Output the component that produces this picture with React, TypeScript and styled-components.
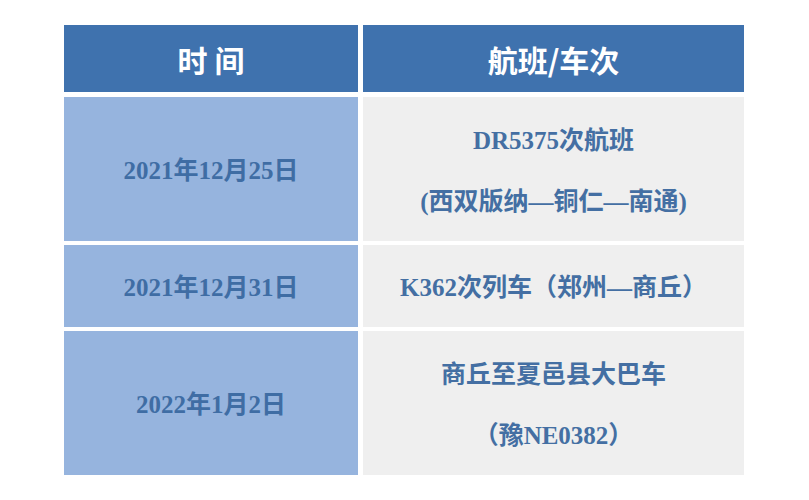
import React from 'react';
import styled, { createGlobalStyle } from 'styled-components';

const GlobalStyle = createGlobalStyle`
  html, body {
    margin: 0;
    padding: 0;
    background: #ffffff;
  }
`;

const Page = styled.div`
  width: 809px;
  height: 500px;
  padding: 25px 0 0 64px;
  box-sizing: border-box;
`;

const Table = styled.div`
  display: grid;
  grid-template-columns: 294px 381px;
  grid-template-rows: 68px 144px 82px 144px;
  column-gap: 5px;
  row-gap: 4px;
`;

const HeadCell = styled.div`
  background: #3f72ae;
  color: #ffffff;
  display: flex;
  align-items: center;
  justify-content: center;
  font-family: 'Noto Sans CJK SC', 'Noto Sans', sans-serif;
  font-weight: 700;
  font-size: 30px;
  white-space: pre;
  margin-bottom: 1px;
`;

const Cell = styled.div<{ $shade: 'blue' | 'grey' }>`
  background: ${({ $shade }) => ($shade === 'blue' ? '#96b4de' : '#efefef')};
  color: ${({ $shade }) => ($shade === 'blue' ? '#3f6da4' : '#446fa3')};
  display: flex;
  flex-direction: column;
  align-items: center;
  justify-content: center;
  gap: 27px;
  padding-top: 4px;
  font-family: 'Liberation Serif', 'Noto Sans CJK SC', serif;
  font-weight: 700;
  font-size: 25px;
  line-height: 34px;
  white-space: nowrap;
`;

const rows = [
  { date: '2021年12月25日', lines: ['DR5375次航班', '(西双版纳—铜仁—南通)'] },
  { date: '2021年12月31日', lines: ['K362次列车（郑州—商丘）'] },
  { date: '2022年1月2日', lines: ['商丘至夏邑县大巴车', '（豫NE0382）'] },
];

const App: React.FC = () => (
  <Page>
    <GlobalStyle />
    <Table>
      <HeadCell>时 间</HeadCell>
      <HeadCell>航班/车次</HeadCell>
      {rows.map((row) => (
        <React.Fragment key={row.date}>
          <Cell $shade="blue">{row.date}</Cell>
          <Cell $shade="grey">
            {row.lines.map((line) => (
              <span key={line}>{line}</span>
            ))}
          </Cell>
        </React.Fragment>
      ))}
    </Table>
  </Page>
);

export default App;
